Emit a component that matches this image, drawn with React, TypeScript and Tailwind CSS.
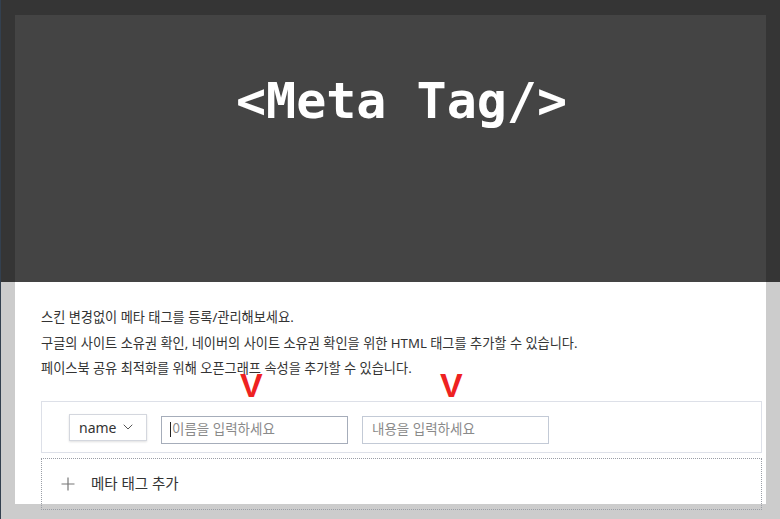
import React from "react";
import { ChevronDown } from "lucide-react";

export default function App() {
  const kr = { fontFamily: '"Noto Sans", "Noto Sans CJK KR", sans-serif' };
  return (
    <div className="w-[780px] h-[519px] overflow-hidden border-l border-[#33404f] bg-[#cccccc] relative" style={kr}>
      <div className="bg-[#353535] px-[14px] pt-[15px]">
        <div className="h-[267px] bg-[#444444] flex items-start justify-center pl-[22px] pt-[61px]">
          <h1
            className="text-white font-bold text-[50px] leading-none"
            style={{ fontFamily: '"DejaVu Sans Mono", monospace' }}
          >
            &lt;Meta Tag/&gt;
          </h1>
        </div>
      </div>
      <div className="px-[14px]">
        <div className="h-[222px] bg-white pl-[26px] pr-[4px] pt-[23px]">
          <div className="text-[13.2px] leading-[25.5px] text-[#333333]">
            <p>스킨 변경없이 메타 태그를 등록/관리해보세요.</p>
            <p>구글의 사이트 소유권 확인, 네이버의 사이트 소유권 확인을 위한 HTML 태그를 추가할 수 있습니다.</p>
            <p>페이스북 공유 최적화를 위해 오픈그래프 속성을 추가할 수 있습니다.</p>
          </div>
          <div className="mt-[19px] h-[52px] border border-[#dde0e8] flex items-start pl-[27px] pt-[12px] gap-[14px]">
            <div className="w-[78px] h-[27px] border border-[#d4d7de] shadow-[0_1px_2px_rgba(0,0,0,0.12)] flex items-center justify-between pl-[9px] pr-[10px] text-[14px] text-[#333333]">
              <span>name</span>
              <ChevronDown size={16} strokeWidth={1.5} className="text-[#555]" />
            </div>
            <div className="mt-[2px] w-[187px] h-[28px] border border-[#a6adba] flex items-center pl-[8px] text-[13.5px] text-[#8a8a8a]">
              <span className="w-px h-[15px] bg-[#222] mr-[1px]" />
              <span>이름을 입력하세요</span>
            </div>
            <div className="mt-[2px] w-[187px] h-[28px] border border-[#c3cad6] flex items-center pl-[9px] text-[13.5px] text-[#8a8a8a]">
              <span>내용을 입력하세요</span>
            </div>
          </div>
          <div className="mt-[5px] h-[52px] border border-dotted border-[#9a9ea6] flex items-center pl-[19px] gap-[16px] text-[14.5px] text-[#333333]">
            <svg width="14" height="14" viewBox="0 0 14 14" className="text-[#777]">
              <path d="M7 0.5V13.5M0.5 7H13.5" stroke="currentColor" strokeWidth="1.2" />
            </svg>
            <span>메타 태그 추가</span>
          </div>
        </div>
      </div>
      <span
        className="absolute left-[239px] top-[368px] text-[34px] font-bold text-[#ee2222] leading-none"
        style={{ fontFamily: '"Liberation Sans", Arial, sans-serif' }}
      >
        V
      </span>
      <span
        className="absolute left-[439px] top-[368px] text-[34px] font-bold text-[#ee2222] leading-none"
        style={{ fontFamily: '"Liberation Sans", Arial, sans-serif' }}
      >
        V
      </span>
    </div>
  );
}
